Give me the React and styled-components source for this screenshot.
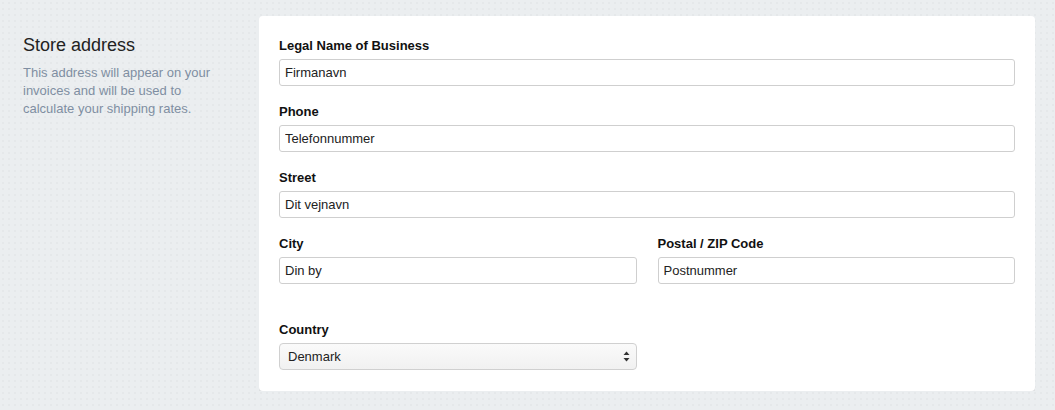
import React from "react";
import styled, { createGlobalStyle } from "styled-components";

const GlobalStyle = createGlobalStyle`
  html, body {
    margin: 0;
    padding: 0;
    background-color: #ebeef0;
    background-image: radial-gradient(rgba(0, 0, 0, 0.025) 1px, transparent 1px);
    background-size: 6px 6px;
    font-family: "Liberation Sans", Arial, sans-serif;
  }
  * {
    box-sizing: border-box;
  }
`;

const Field = ({ label, value }) => (
  <FieldStyled>
    <label>{label}</label>
    <input type="text" defaultValue={value} />
  </FieldStyled>
);

export default function App() {
  return (
    <>
      <GlobalStyle />
      <PageStyled>
        <aside className="intro">
          <h2>Store address</h2>
          <p>
            This address will appear on your invoices and will be used to
            calculate your shipping rates.
          </p>
        </aside>

        <CardStyled>
          <Field label="Legal Name of Business" value="Firmanavn" />
          <Field label="Phone" value="Telefonnummer" />
          <Field label="Street" value="Dit vejnavn" />
          <Row>
            <Field label="City" value="Din by" />
            <Field label="Postal / ZIP Code" value="Postnummer" />
          </Row>
          <SelectField>
            <label>Country</label>
            <div className="select">
              <span>Denmark</span>
              <svg width="7" height="11" viewBox="0 0 7 11">
                <path d="M3.5 0.5 L6.5 4 L0.5 4 Z" fill="#333" />
                <path d="M3.5 10.5 L6.5 7 L0.5 7 Z" fill="#333" />
              </svg>
            </div>
          </SelectField>
        </CardStyled>
      </PageStyled>
    </>
  );
}

const PageStyled = styled.div`
  display: flex;
  align-items: flex-start;
  padding: 16px 20px 0 23px;

  .intro {
    width: 236px;
    flex-shrink: 0;
    padding-top: 18px;
    padding-right: 25px;

    h2 {
      margin: 0;
      font-size: 18px;
      line-height: 22px;
      font-weight: 400;
      color: #222;
    }

    p {
      margin: 8px 0 0;
      font-size: 13px;
      line-height: 18px;
      color: #7f8ea2;
    }
  }
`;

const CardStyled = styled.div`
  flex: 1;
  background: #fff;
  border-radius: 4px;
  box-shadow: 0 2px 0 rgba(0, 0, 0, 0.07);
  padding: 21px 20px 21px 20px;
  display: flex;
  flex-direction: column;
  gap: 17px;
`;

const Row = styled.div`
  display: flex;
  gap: 21px;
  margin-bottom: 20px;

  > div {
    flex: 1;
  }
`;

const FieldStyled = styled.div`
  display: flex;
  flex-direction: column;
  gap: 4px;

  label {
    font-size: 13px;
    line-height: 18px;
    font-weight: 700;
    color: #111;
  }

  input {
    height: 27px;
    width: 100%;
    border: 1px solid #cfcfcf;
    border-radius: 3px;
    padding: 0 5px;
    font-family: "Liberation Sans", Arial, sans-serif;
    font-size: 13px;
    color: #222;
    outline: none;
  }
`;

const SelectField = styled.div`
  display: flex;
  flex-direction: column;
  gap: 4px;
  width: calc(50% - 10.5px);

  label {
    font-size: 13px;
    line-height: 18px;
    font-weight: 700;
    color: #111;
  }

  .select {
    height: 27px;
    border: 1px solid #d0d0d0;
    border-radius: 4px;
    background: linear-gradient(#fafafa, #f1f1f1);
    display: flex;
    align-items: center;
    justify-content: space-between;
    padding: 0 6px 0 8px;
    font-size: 13px;
    color: #222;
  }
`;
